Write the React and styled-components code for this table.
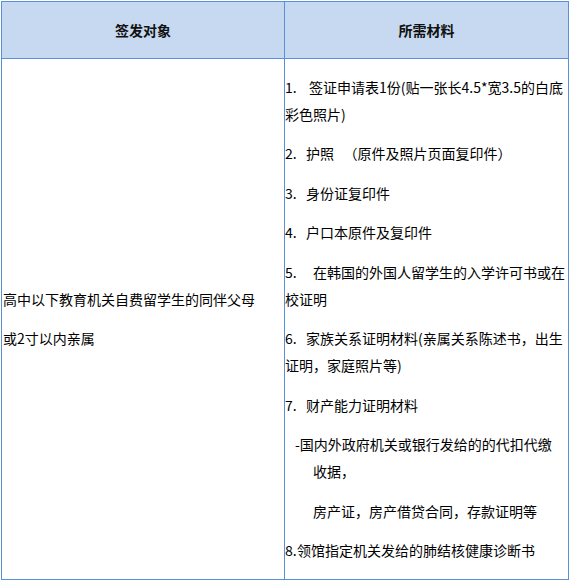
import React from "react";
import styled, { createGlobalStyle } from "styled-components";

const GlobalStyle = createGlobalStyle`
  html, body {
    margin: 0;
    padding: 0;
    background: #ffffff;
  }
  body {
    font-family: "Noto Sans CJK SC", "Noto Sans", sans-serif;
    font-size: 14px;
    color: #000000;
  }
  * {
    box-sizing: border-box;
  }
`;

const Table = styled.div`
  margin: 1px 0 0 1px;
  width: 568px;
  border: 1px solid #5b8fd8;
  display: grid;
  grid-template-columns: 283px 1fr;
  grid-template-rows: 57px 520px;
`;

const HeadCell = styled.div`
  background: #c6d9f0;
  border-bottom: 1px solid #5b8fd8;
  border-right: ${({ first }) => (first ? "1px solid #5b8fd8" : "none")};
  display: flex;
  align-items: center;
  justify-content: center;
  font-weight: bold;
  font-size: 14px;
  color: #111111;
`;

const Cell = styled.div`
  border-right: ${({ first }) => (first ? "1px solid #5b8fd8" : "none")};
  display: flex;
  flex-direction: column;
  justify-content: center;
  padding: 0 0 0 ${({ first }) => (first ? "1px" : "0")};
`;

const Para = styled.p`
  margin: 0 0 12.5px;
  line-height: 27px;
  white-space: nowrap;
  padding-left: ${({ indent }) => indent || 0}px;
  &:last-child {
    margin-bottom: 0;
  }
`;

const Line = styled.span`
  display: block;
  padding-left: ${({ indent }) => indent || 0}px;
`;

// numbering followed by the gap seen in the source table
const Num = styled.span`
  display: inline-block;
  width: ${({ w }) => w || 21}px;
`;

export default function App() {
  return (
    <>
      <GlobalStyle />
      <Table>
        <HeadCell first>签发对象</HeadCell>
        <HeadCell>所需材料</HeadCell>
        <Cell first>
          <Para>高中以下教育机关自费留学生的同伴父母</Para>
          <Para>或2寸以内亲属</Para>
        </Cell>
        <Cell>
          <Para>
            <Line><Num w={24}>1.</Num>签证申请表1份(贴一张长4.5*宽3.5的白底</Line>
            <Line>彩色照片)</Line>
          </Para>
          <Para><Num>2.</Num>护照&nbsp;&nbsp;&nbsp;（原件及照片页面复印件）</Para>
          <Para><Num>3.</Num>身份证复印件</Para>
          <Para><Num>4.</Num>户口本原件及复印件</Para>
          <Para>
            <Line><Num w={28}>5.</Num>在韩国的外国人留学生的入学许可书或在</Line>
            <Line>校证明</Line>
          </Para>
          <Para>
            <Line><Num>6.</Num>家族关系证明材料(亲属关系陈述书，出生</Line>
            <Line>证明，家庭照片等)</Line>
          </Para>
          <Para><Num>7.</Num>财产能力证明材料</Para>
          <Para>
            <Line indent={10}>-国内外政府机关或银行发给的的代扣代缴</Line>
            <Line indent={28}>收据，</Line>
          </Para>
          <Para indent={28}>房产证，房产借贷合同，存款证明等</Para>
          <Para><Num w={12}>8.</Num>领馆指定机关发给的肺结核健康诊断书</Para>
        </Cell>
      </Table>
    </>
  );
}
